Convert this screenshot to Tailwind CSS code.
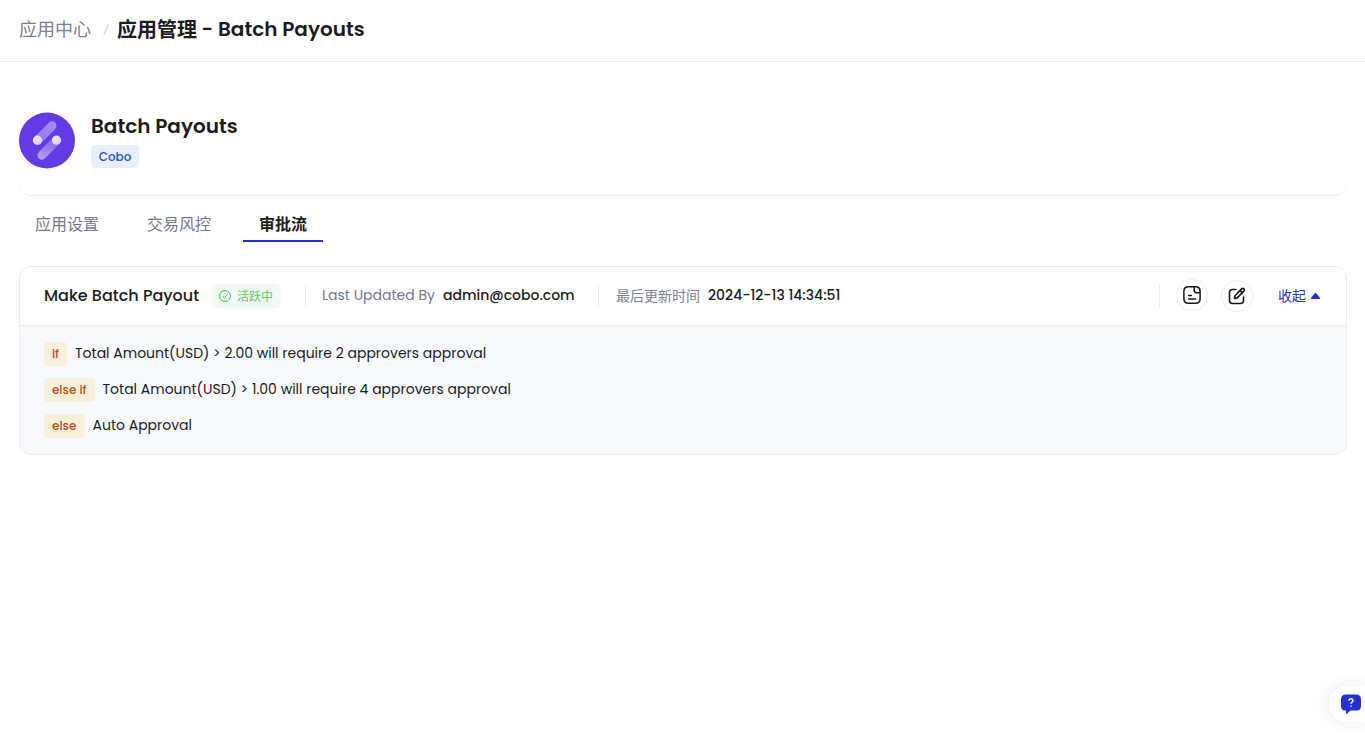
<!DOCTYPE html>
<html lang="zh-CN">
<head>
<meta charset="utf-8">
<title>Batch Payouts</title>
<script src="https://cdn.jsdelivr.net/npm/@tailwindcss/browser@4"></script>
</head>
<body class="h-screen overflow-hidden bg-white font-['Poppins','Inter','Noto_Sans_CJK_SC',sans-serif] text-[#1c1c1c] whitespace-nowrap">
<header class="flex h-[62px] items-center border-b border-[#ededf0] pl-[19px] pb-[3px]">
  <span class="w-[72px] pb-0.5 text-[18px] text-[#7c8194] font-['Noto_Sans_CJK_SC',sans-serif]">应用中心</span>
  <svg class="ml-3 mt-0.5 h-3 w-1.5" viewBox="0 0 6 12" fill="none" stroke="#c6c9d2"><path d="M.8 11.5 5.2.5"/></svg>
  <h1 class="ml-2 flex text-[20px] font-semibold"><span class="w-[84.5px] font-['Noto_Sans_CJK_SC',sans-serif] font-bold">应用管理</span><span class="w-[16.5px]">-</span><span>Batch Payouts</span></h1>
</header>
<main class="pr-[18px] pl-[19px]">
  <section class="flex h-[134px] items-start rounded-b-xl border-b border-[#ecedf2] pt-[50px]">
    <svg class="h-[57px] w-14" viewBox="0 0 56 56" fill="none">
      <defs>
        <linearGradient id="a" x1="36" y1="10" x2="20" y2="28" gradientUnits="userSpaceOnUse"><stop stop-color="#a68df0"/><stop offset="1" stop-color="#9476ec"/></linearGradient>
        <linearGradient id="b" x1="37" y1="28" x2="22" y2="45" gradientUnits="userSpaceOnUse"><stop stop-color="#8463e8"/><stop offset="1" stop-color="#b09af3"/></linearGradient>
        <linearGradient id="c" x1="0" y1="0" x2="1" y2="1"><stop stop-color="#f1edfd"/><stop offset="1" stop-color="#d3c7f8"/></linearGradient>
      </defs>
      <circle cx="28" cy="28" r="28" fill="#643ae4"/>
      <path d="M18.5 28 33 13.3" stroke="url(#a)" stroke-width="9" stroke-linecap="round"/>
      <path d="M37.5 28 23 42.7" stroke="url(#b)" stroke-width="9" stroke-linecap="round"/>
      <circle cx="18.5" cy="27.700" r="4.6" fill="url(#c)"/><circle cx="37.5" cy="27.700" r="4.6" fill="url(#c)"/>
    </svg>
    <div class="ml-4 flex flex-col items-start">
      <h2 class="h-[33px] text-[20px] leading-[29px] font-semibold">Batch Payouts</h2>
      <span class="flex h-[23px] w-12 items-center justify-center rounded bg-[#e8f0fe] text-xs font-medium text-[#2452cf]">Cobo</span>
    </div>
  </section>
  <nav class="flex h-[46px] text-base leading-[55px] text-[#74798c] font-['Noto_Sans_CJK_SC',sans-serif]">
    <a class="w-28 pl-4">应用设置</a><a class="w-28 pl-4">交易风控</a><a class="w-20 border-b-2 border-[#2430d0] text-center font-bold text-[#1c1c1c]">审批流</a>
  </nav>
  <section class="mt-6 h-[189px] w-[1328px] overflow-hidden rounded-xl border border-[#ebecf1] bg-[#f8f9fd]">
    <div class="flex h-[59px] items-center border-b border-[#e9ebf1] bg-white pl-6 text-sm">
      <h3 class="w-[167px] text-base font-medium">Make Batch Payout</h3>
      <span class="flex h-6 w-[70px] items-center gap-1.5 rounded-md bg-[#f1f9f2] pl-2 text-xs text-[#5fca6f] font-['Noto_Sans_CJK_SC',sans-serif]"><svg class="size-3" viewBox="0 0 12 12" fill="none" stroke="#3fbf53"><circle cx="6" cy="6" r="5.5"/><path d="m3.5 6.1 1.8 1.7L8.7 4.4"/></svg>活跃中</span>
      <i class="ml-6 h-6 w-px bg-[#ebecf1]"></i>
      <span class="ml-4 w-[121px] pb-0.5 text-[#74798c]">Last Updated By</span>
      <span class="w-[155px] pb-0.5 font-medium">admin@cobo.com</span>
      <i class="h-6 w-px bg-[#ebecf1]"></i>
      <span class="ml-[17px] w-[92px] pb-0.5 text-[#7c8194] font-['Noto_Sans_CJK_SC',sans-serif]">最后更新时间</span>
      <span class="pb-0.5 font-medium">2024-12-13 14:34:51</span>
      <div class="ml-auto flex h-full items-center pr-6">
        <i class="h-6 w-px bg-[#ebecf1]"></i>
        <span class="ml-4 mb-0.5 flex size-8 items-center justify-center rounded-full border border-[#ededf3]">
          <svg class="size-5" viewBox="0 0 20 20" fill="none" stroke="#141414" stroke-width="1.5" stroke-linecap="round" stroke-linejoin="round"><path d="M6.500 1.700h7q4.600 0 4.600 4.600v7.400q0 4.600-4.600 4.600h-7q-4.600 0-4.600-4.600V6.300q0-4.600 4.600-4.600Z"/><path d="M12.200 2v3.200q0 2.500 2.500 2.500h3M6.700 10.500h2.700M6.700 14h6.800"/></svg>
        </span>
        <span class="ml-[13px] flex size-8 items-center justify-center rounded-full border border-[#ededf3]">
          <svg class="size-5" viewBox="0 0 20 20" fill="none" stroke="#141414" stroke-width="1.600" stroke-linecap="round" stroke-linejoin="round"><path d="M9 3.500H5.500Q2.500 3.500 2.500 6.500v8q0 3 3 3h8q3 0 3-3V11"/><path d="m8 9.700 6.600-6.800q1.100-1 2.200 0t0 2.200L10.200 11.900l-2.700.6Z"/><path d="m13.200 4.500 2.100 2.100"/></svg>
        </span>
        <span class="ml-[25px] pb-0.5 text-[#2430d0] font-['Noto_Sans_CJK_SC',sans-serif]">收起</span>
        <svg class="ml-[5px] mr-0.5 h-1.5 w-[9px]" viewBox="0 0 9 6" fill="#2430d0"><path d="M3.700.4q.8-.8 1.600 0l3.500 4q.5 1.600-.5 1.600H.700q-1 0-.5-1.600Z"/></svg>
      </div>
    </div>
    <div class="flex flex-col gap-3 pt-4 pl-6 text-sm">
      <p class="flex h-6 items-center gap-2"><b class="flex h-6 w-[23px] items-center justify-center rounded bg-[#f9f0dc] text-xs font-medium text-[#b4501e]">if</b><span class="pb-0.5">Total Amount(USD) &gt; 2.00 will require 2 approvers approval</span></p>
      <p class="flex h-6 items-center gap-2"><b class="flex h-6 w-[50.500px] items-center justify-center rounded bg-[#f9f0dc] text-xs font-medium text-[#b4501e]">else if</b><span class="pb-0.5">Total Amount(USD) &gt; 1.00 will require 4 approvers approval</span></p>
      <p class="flex h-6 items-center gap-2"><b class="flex h-6 w-[40.500px] items-center justify-center rounded bg-[#f9f0dc] text-xs font-medium text-[#b4501e]">else</b><span class="pb-0.5">Auto Approval</span></p>
    </div>
  </section>
</main>
<button class="fixed top-[686px] right-0 flex h-9 w-9 items-center rounded-l-full bg-white pl-3 shadow-[0_0_16px_rgba(0,0,0,0.1)]">
  <svg class="h-5 w-5 shrink-0" viewBox="0 0 20 20"><path fill="#2430d0" d="M5 .500h10Q20 .500 20 5.500v6.500q0 4.500-4.500 4.500H9.500L6 19.800q-1 .5-1-.8v-2.500H4.500Q0 16.500 0 12V5.500Q0 .500 5 .500Z"/><path d="M8 6.700q.2-2 2-2t2 1.800q0 1-1.200 1.800-.8.500-.8 1.500M10 11.600v1.200" fill="none" stroke="#fff" stroke-width="1.500"/></svg>
</button>
</body>
</html>
